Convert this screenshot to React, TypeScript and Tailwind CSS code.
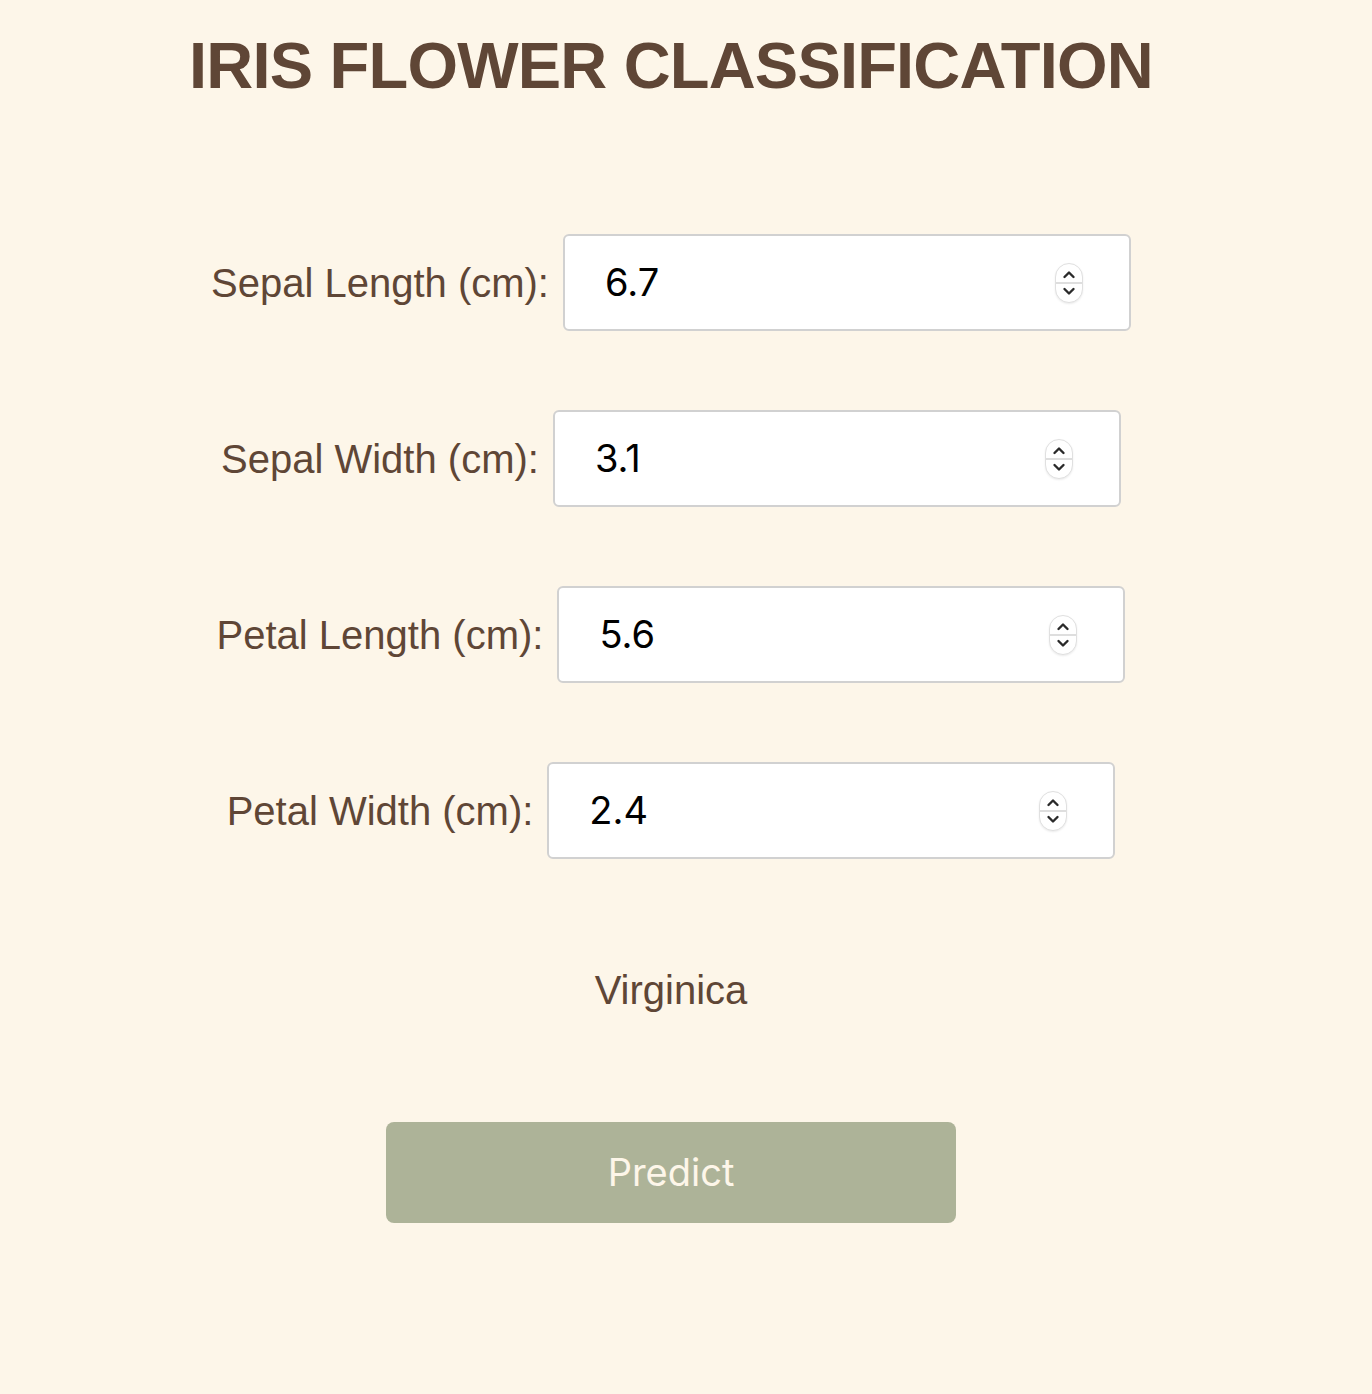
import { useState } from "react";

const fields = [
  { key: "sepalLength", label: "Sepal Length (cm):", value: "6.7" },
  { key: "sepalWidth", label: "Sepal Width (cm):", value: "3.1" },
  { key: "petalLength", label: "Petal Length (cm):", value: "5.6" },
  { key: "petalWidth", label: "Petal Width (cm):", value: "2.4" },
];

function Spinner() {
  return (
    <div className="flex flex-col shrink-0 w-[28px] h-[40px] rounded-[14px] border border-[#e0e0e0] bg-white overflow-hidden shadow-[0_1px_2px_rgba(0,0,0,0.08)]">
      <div className="flex-1 flex items-end justify-center pb-[3px] border-b-2 border-[#dedede]">
        <svg width="14" height="9" viewBox="0 0 14 9" fill="none">
          <path d="M2.5 7L7 2.5L11.5 7" stroke="#2a2a2a" strokeWidth="2.4" strokeLinecap="round" strokeLinejoin="round" />
        </svg>
      </div>
      <div className="flex-1 flex items-start justify-center pt-[3px]">
        <svg width="14" height="9" viewBox="0 0 14 9" fill="none">
          <path d="M2.5 2L7 6.5L11.5 2" stroke="#2a2a2a" strokeWidth="2.4" strokeLinecap="round" strokeLinejoin="round" />
        </svg>
      </div>
    </div>
  );
}

export default function App() {
  const [values, setValues] = useState<Record<string, string>>(
    Object.fromEntries(fields.map((f) => [f.key, f.value]))
  );

  return (
    <div className="min-h-[1394px] w-full bg-[#fdf6e9] font-['Liberation_Sans',Arial,sans-serif]">
      <div className="w-[1342px] flex flex-col items-center">
        <h1 className="mt-[29px] text-[65px] leading-[74px] font-bold text-[#5f4636] tracking-[-0.8px]">
          IRIS FLOWER CLASSIFICATION
        </h1>

        {/* form rows */}
        <div className="mt-[131px] flex flex-col gap-[79px] items-center">
          {fields.map((f) => (
            <div key={f.key} className="flex flex-row items-center gap-[14px]">
              <label className="text-[40px] text-[#5f4636]">{f.label}</label>
              <div className="w-[568px] h-[97px] rounded-[6px] border-2 border-[#d1d1d1] bg-white flex items-center pl-[40px] pr-[46px]">
                <input
                  className="w-0 min-w-0 flex-1 outline-none bg-transparent text-[38px] text-black font-['Inter',sans-serif]"
                  value={values[f.key]}
                  onChange={(e) => setValues({ ...values, [f.key]: e.target.value })}
                />
                <Spinner />
              </div>
            </div>
          ))}
        </div>

        <p className="mt-[101px] text-[40px] text-[#5f4636]">Virginica</p>

        <button className="mt-[102px] w-[570px] h-[101px] rounded-[8px] bg-[#adb398] text-[#fdf6e9] text-[38px] font-['Inter',sans-serif]">
          Predict
        </button>
      </div>
    </div>
  );
}
